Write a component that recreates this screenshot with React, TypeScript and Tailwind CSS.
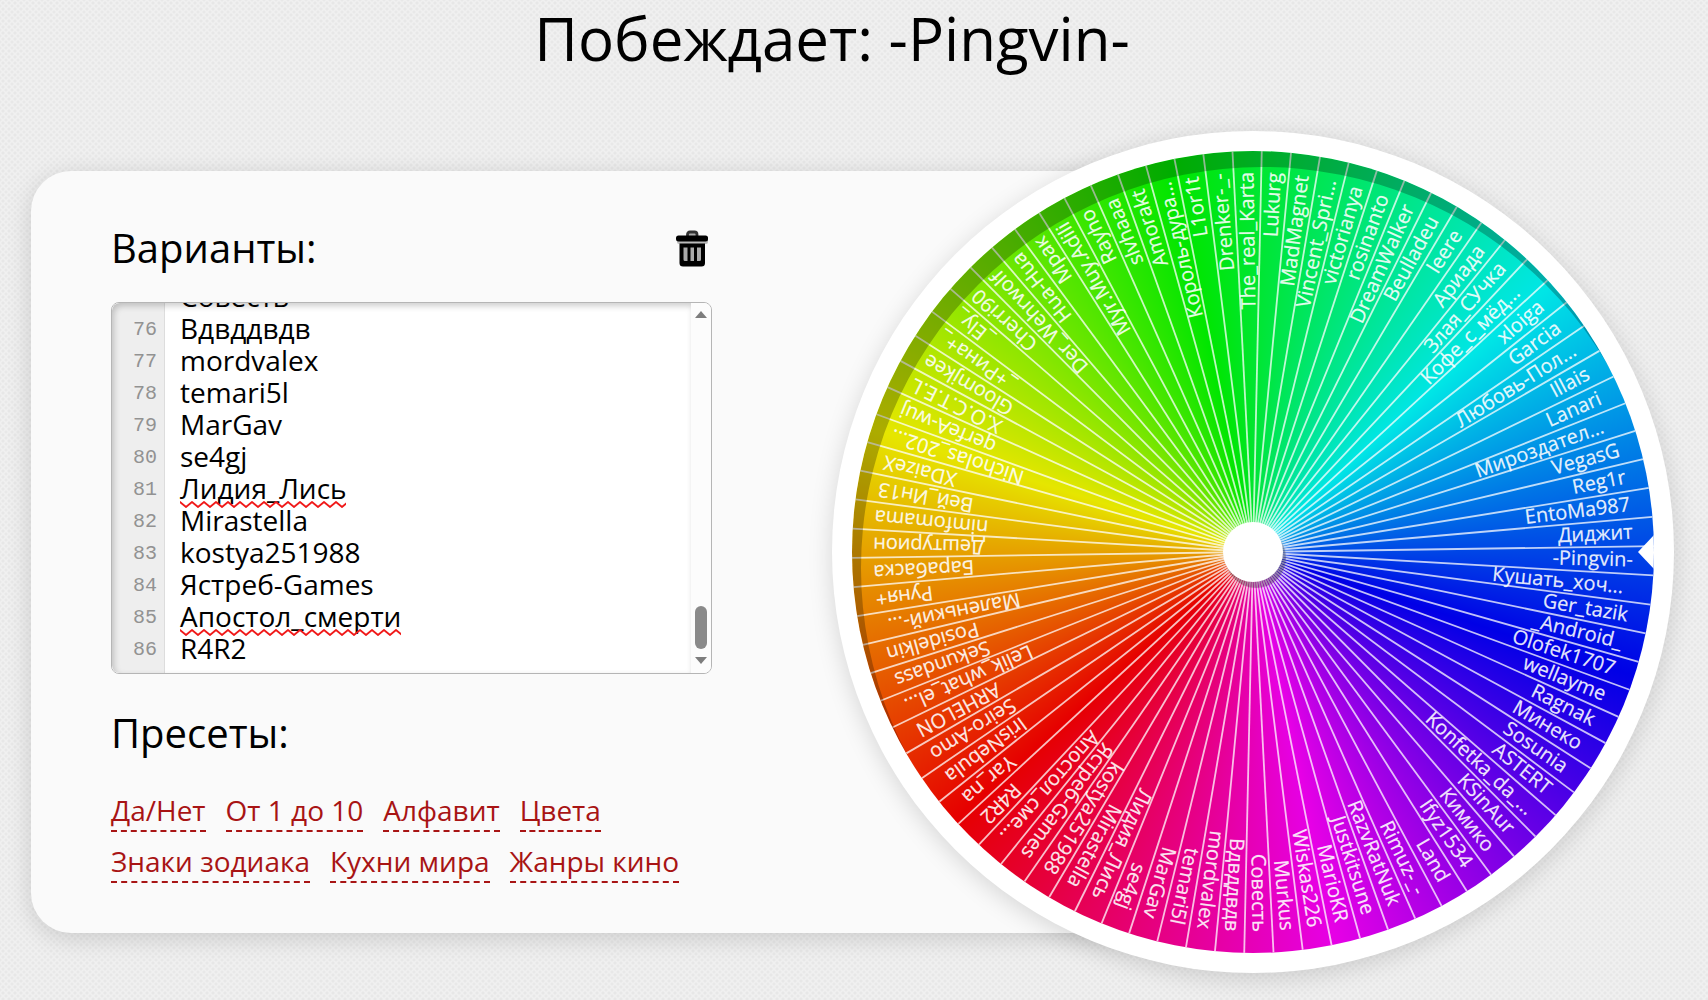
import React, { useLayoutEffect, useRef } from 'react';

const names = [
  'Yar_na', 'IrisNebula', 'Seiro-Amo', 'ARHELON', 'Lelik_what_el...', 'Sekundass', 'Posidelkin',
  'Маленький-...', 'Руня+', 'Барабаска', 'Дештурион', 'nimfomama', 'Вей_Ин13', 'XDaizeX',
  'Nicholas_202...', 'qerfeA-wuj', 'X.O.C.T.E.L', 'Gloomjkee', '_+Рина+_', '_Ely_', 'Cherri90',
  'Der_Wehrwolf', 'Hua-Hua', 'Мрак', 'Myr.Muy.Adili', 'Rayho', 'slvhaaa', 'Amorakt',
  'Король-дура...', 'L1or1t', 'Drenker-_-', 'The_real_Karta', 'Lukurg', 'MadMagnet',
  'Vincent_Spri...', 'victorianya', 'rosinanto', 'DreamWalker', 'Beulladeu', 'leere', 'Ариада',
  'Злая_СУчка', 'Кофе_с_мёд...', 'xloiga', 'Garcia', 'Любовь-Пол...', 'Illais', 'Lanari',
  'Мироздател...', 'VegasG', 'Reg1r', 'EntoMa987', 'Диджит', '-Pingvin-', 'Кушать_хоч...',
  'Ger_tazik', '_Android_', 'Olofek1707', 'wellayme', 'Ragnak', 'Минеко', 'Sosunia', 'ASTERT',
  'Konfetka_da_...', 'KSinAur', 'Кимико', 'Ifyz1534', 'Land', 'Rimuz-_-', 'RazvRatNuk',
  'Justkitsune', 'MarioKR', 'Wiskas226', 'Murkus', 'Совесть', 'Вдвддвдв', 'mordvalex', 'temari5l',
  'MarGav', 'se4gj', 'Лидия_Лись', 'Mirastella', 'kostya251988', 'Ястреб-Games', 'Апостол_смерти',
  'R4R2',
];

const presets = ['Да/Нет', 'От 1 до 10', 'Алфавит', 'Цвета', 'Знаки зодиака', 'Кухни мира', 'Жанры кино'];

const STEP = 360 / names.length;
// rotation the wheel stopped at, measured from three o'clock
const START = 137.3;

const inset = ['Маленький-...', 'Кофе_с_мёд...', 'Мироздател...', 'Кушать_хоч...'];

const shorten = (name: string) => (name === 'Апостол_смерти' ? 'Апостол_сме...' : name);

const TrashIcon: React.FC = () => (
  <svg viewBox="0 0 32 37" className="w-8 h-[37px]" aria-hidden="true">
    <rect x="1" y="6" width="31" height="8" rx="2" fill="#bbb" />
    <path d="M11.5 7V4.5Q11.5 2 14 2H18.5Q21 2 21 4.5V7" fill="#aaa" stroke="#333" strokeWidth="2.8" />
    <rect x="0" y="5.5" width="32" height="6" rx="2.5" fill="#000" />
    <path d="M3.5 13.5H29V33Q29 36.5 25.5 36.5H7Q3.5 36.5 3.5 33Z" fill="#000" />
    <path d="M7.5 17.5H11.5V31H9Q7.5 31 7.5 29.5ZM14.5 17.5H18V31H14.5ZM21 17.5H25V29.5Q25 31 23.5 31H21Z" fill="#aaa" />
  </svg>
);

const Squiggle: React.FC<{ className: string; id: string }> = ({ className, id }) => (
  <svg className={`absolute left-[68px] h-[7px] pointer-events-none ${className}`} aria-hidden="true">
    <defs>
      <pattern id={id} width="12" height="7" patternUnits="userSpaceOnUse">
        <path d="M-1 0L0 1L6 6L12 1L13 0" fill="none" stroke="#f01818" strokeWidth="1.8" />
      </pattern>
    </defs>
    <rect width="100%" height="7" fill={`url(#${id})`} />
  </svg>
);

const Editor: React.FC = () => {
  const area = useRef<HTMLTextAreaElement>(null);

  useLayoutEffect(() => {
    if (area.current) area.current.scrollTop = area.current.scrollHeight;
  }, []);

  return (
    <div className="relative flex h-[372px] rounded-lg border border-[#b5b5b5] bg-white overflow-hidden">
      <div className="w-[53px] shrink-0 flex flex-col justify-end items-end pb-[7px] pr-[7px] bg-[#eeeeee] border-r border-[#dddddd] font-['Liberation_Mono',monospace] text-xl leading-8 text-[#929292]">
        {names.slice(74).map((name, i) => (
          <span key={name} className="h-8 shrink-0">{i + 75}</span>
        ))}
      </div>
      <textarea
        ref={area}
        id="variants"
        spellCheck={false}
        defaultValue={names.join('\n')}
        className="flex-1 min-w-0 pl-[15px] pb-[9px] resize-none outline-none overflow-hidden bg-transparent text-[28px] leading-8 text-black"
      />
      <Squiggle id="wave-a" className="bottom-[165px] w-[166px]" />
      <Squiggle id="wave-b" className="bottom-[37px] w-[221px]" />

      {/* Scrollbar */}
      <div className="w-5 shrink-0 flex flex-col items-center pt-2 pb-[9px] bg-[#fcfcfc]">
        <svg viewBox="0 0 12 7" className="w-3 h-[7px]" aria-hidden="true"><path d="M0 7L6 0L12 7Z" fill="#7d7d7d" /></svg>
        <div className="mt-auto mb-2 w-3 h-[43px] rounded-full bg-[#8a8a8a]"></div>
        <svg viewBox="0 0 12 7" className="w-3 h-[7px]" aria-hidden="true"><path d="M0 0L6 7L12 0Z" fill="#7d7d7d" /></svg>
      </div>
      <div className="absolute inset-0 right-5 rounded-l-lg pointer-events-none shadow-[inset_2px_3px_6px_rgba(0,0,0,0.2)]"></div>
    </div>
  );
};

const Wheel: React.FC = () => (
  <div className="relative shrink-0 w-[842px] aspect-square -ml-[420px] rounded-full bg-white p-5 shadow-[0_5px_25px_rgba(0,0,0,0.15)]">
    <div className="relative w-full h-full rounded-full overflow-hidden bg-[conic-gradient(from_228deg,#e60000,#e6e600,#00e600,#00e6e6,#0000e6,#e600e6,#e60000)]">
      <svg viewBox="0 0 802 802" className="w-full h-full">
        {names.map((name, i) => (
          <g key={name} transform={`rotate(${START + i * STEP} 401 401)`}>
            <line x1="401" y1="401" x2="802" y2="401" stroke="#fff" strokeOpacity="0.75" strokeWidth="1.8" />
            <text
              transform={`rotate(${STEP / 2} 401 401)`}
              x={inset.includes(name) ? 773 : 781}
              y="407"
              textAnchor="end"
              fill="#fff"
              fillOpacity="0.9"
              stroke="#fff"
              strokeOpacity="0.4"
              strokeWidth="0.5"
              className="text-xl"
            >
              {shorten(name)}
            </text>
          </g>
        ))}
        {/* Pointer */}
        <path d="M802 384L786 401L802 418Z" fill="#fff" />
      </svg>
      <div className="absolute inset-0 rounded-full shadow-[inset_9px_16px_0_rgba(0,0,0,0.25)]"></div>
      {/* Hub */}
      <div className="absolute inset-0 m-auto size-[60px] rounded-full bg-white shadow-[3px_6px_1px_rgba(0,0,0,0.3)]"></div>
    </div>
  </div>
);

export default function App() {
  return (
    <div className="min-h-screen bg-[#f0f0f0] bg-[radial-gradient(rgba(0,0,0,0.04)_1px,transparent_2px),radial-gradient(rgba(0,0,0,0.03)_1px,transparent_2px)] bg-[size:6px_6px,6px_6px] bg-[position:0_0,3px_3px] font-['Open_Sans',sans-serif] text-black">
      <h1 className="h-[131px] pr-11 text-center text-[60px] leading-[77px] whitespace-nowrap">Побеждает: -Pingvin-</h1>

      <main className="flex items-center pl-[31px] pr-[34px]">
        <section className="flex-1 min-w-0 h-[762px] rounded-[40px] bg-[#fafafa] pl-20 pt-[50px] shadow-[0_5px_25px_rgba(0,0,0,0.15)]">
          <div className="w-[601px]">
            <div className="flex items-center justify-between h-[54px] pr-1">
              <label htmlFor="variants" className="text-[40px] leading-[50px]">Варианты:</label>
              <button type="button" aria-label="Очистить" className="cursor-pointer"><TrashIcon /></button>
            </div>
            <div className="mt-[27px]">
              <Editor />
            </div>
            <h2 className="mt-[34px] text-[40px] leading-[50px]">Пресеты:</h2>
            <nav className="mt-[35px] flex flex-wrap gap-x-5 gap-y-3">
              {presets.map((preset) => (
                <a key={preset} href="#" className="h-[39px] border-b-2 border-dashed border-[#a81414] text-[28px] leading-[35px] text-[#a81414]">
                  {preset}
                </a>
              ))}
            </nav>
          </div>
        </section>

        <Wheel />
      </main>
    </div>
  );
}
